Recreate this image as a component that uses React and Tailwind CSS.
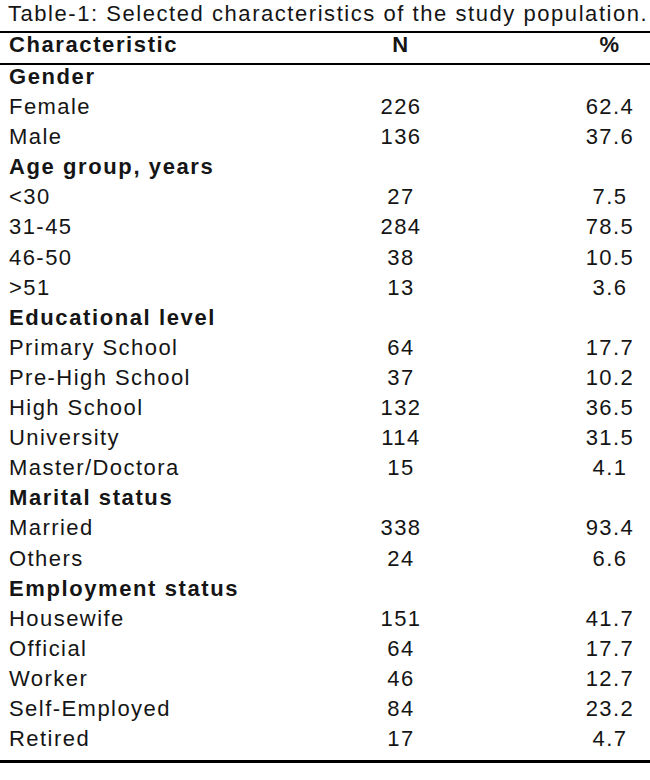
import React from "react";

/* TABLE DATA */
const groups = [
  {
    label: "Gender",
    rows: [
      ["Female", "226", "62.4"],
      ["Male", "136", "37.6"],
    ],
  },
  {
    label: "Age group, years",
    rows: [
      ["<30", "27", "7.5"],
      ["31-45", "284", "78.5"],
      ["46-50", "38", "10.5"],
      [">51", "13", "3.6"],
    ],
  },
  {
    label: "Educational level",
    rows: [
      ["Primary School", "64", "17.7"],
      ["Pre-High School", "37", "10.2"],
      ["High School", "132", "36.5"],
      ["University", "114", "31.5"],
      ["Master/Doctora", "15", "4.1"],
    ],
  },
  {
    label: "Marital status",
    rows: [
      ["Married", "338", "93.4"],
      ["Others", "24", "6.6"],
    ],
  },
  {
    label: "Employment status",
    rows: [
      ["Housewife", "151", "41.7"],
      ["Official", "64", "17.7"],
      ["Worker", "46", "12.7"],
      ["Self-Employed", "84", "23.2"],
      ["Retired", "17", "4.7"],
    ],
  },
];

function Row({ label, n, pct, bold, height = "h-[30.1px]" }) {
  return (
    <div
      className={`grid grid-cols-[331px_140px_179px] ${height} leading-[24px] ${
        bold ? "font-bold tracking-[1.6px]" : ""
      }`}
    >
      <div className="pl-[9px] whitespace-nowrap">{label}</div>
      <div className="text-center">{n}</div>
      <div className="pl-[99px] text-center">{pct}</div>
    </div>
  );
}

export default function App() {
  return (
    <div className="w-[650px] h-[780px] bg-white text-[#151515] font-['Liberation_Sans',Arial,sans-serif] text-[22px] tracking-[1.45px]">
      {/* CAPTION */}
      <div className="h-[31px] pl-[8px] leading-[27px] whitespace-nowrap tracking-[1.55px]">
        Table-1: Selected characteristics of the study population.
      </div>

      {/* HEADER */}
      <div className="border-y-2 border-black">
        <Row label="Characteristic" n="N" pct="%" bold height="h-[30px]" />
      </div>

      {/* BODY */}
      <div className="border-b-[3px] border-black pb-[3px]">
        {groups.map((g) => (
          <React.Fragment key={g.label}>
            <Row label={g.label} bold />
            {g.rows.map(([label, n, pct]) => (
              <Row key={label} label={label} n={n} pct={pct} />
            ))}
          </React.Fragment>
        ))}
      </div>
    </div>
  );
}
